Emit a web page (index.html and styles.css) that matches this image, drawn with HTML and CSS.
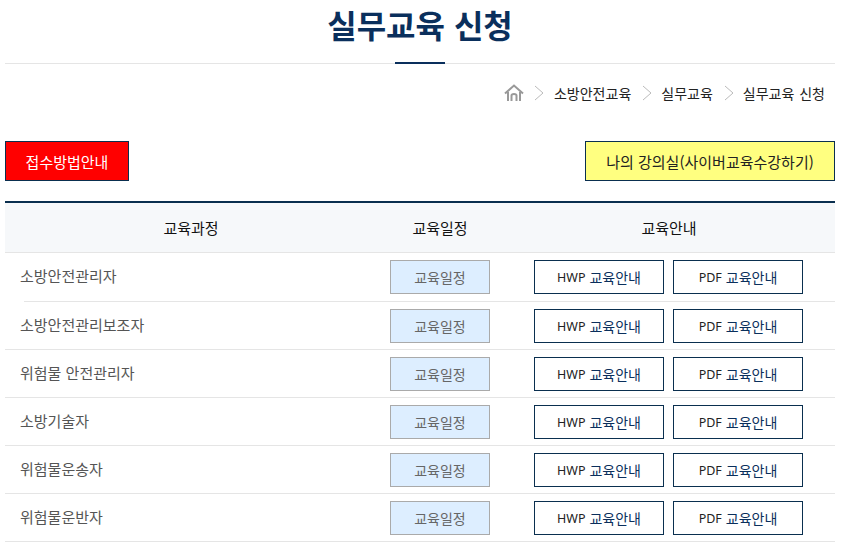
FILE: index.html
```html
<!DOCTYPE html>
<html lang="ko">
<head>
    <meta charset="UTF-8">
    <meta name="viewport" content="width=device-width, initial-scale=1.0">
    <title>실무교육 신청</title>
    <link rel="stylesheet" href="styles.css">
</head>
<body>
    <div class="page">
        <h1 class="page-title">실무교육 신청</h1>

        <div class="breadcrumb">
            <svg class="home" width="20" height="18" viewBox="0 0 20 18" fill="none" stroke="#999" stroke-width="2">
                <path d="M1 9.5 L10 1.5 L19 9.5"/>
                <path d="M4 8 V17 M16 8 V17"/>
                <path d="M7.5 17 V11.5 Q7.5 10 10 10 Q12.5 10 12.5 11.5 V17"/>
            </svg>
            <svg class="sep" width="10" height="18" viewBox="0 0 10 18" fill="none" stroke="#bbb" stroke-width="1"><path d="M1 2 L9 9 L1 16"/></svg>
            <span>소방안전교육</span>
            <svg class="sep" width="10" height="18" viewBox="0 0 10 18" fill="none" stroke="#bbb" stroke-width="1"><path d="M1 2 L9 9 L1 16"/></svg>
            <span>실무교육</span>
            <svg class="sep" width="10" height="18" viewBox="0 0 10 18" fill="none" stroke="#bbb" stroke-width="1"><path d="M1 2 L9 9 L1 16"/></svg>
            <span>실무교육 신청</span>
        </div>

        <div class="actions">
            <a class="btn-red">접수방법안내</a>
            <a class="btn-yellow">나의 강의실(사이버교육수강하기)</a>
        </div>

        <table class="course-table">
            <thead>
                <tr>
                    <th class="col-name">교육과정</th>
                    <th class="col-date">교육일정</th>
                    <th class="col-info">교육안내</th>
                </tr>
            </thead>
            <tbody>
                <tr>
                    <td class="name">소방안전관리자</td>
                    <td class="date"><a class="btn-date">교육일정</a></td>
                    <td class="info"><a class="btn-file">HWP <em>교육안내</em></a><a class="btn-file">PDF <em>교육안내</em></a></td>
                </tr>
                <tr>
                    <td class="name">소방안전관리보조자</td>
                    <td class="date"><a class="btn-date">교육일정</a></td>
                    <td class="info"><a class="btn-file">HWP <em>교육안내</em></a><a class="btn-file">PDF <em>교육안내</em></a></td>
                </tr>
                <tr>
                    <td class="name">위험물 안전관리자</td>
                    <td class="date"><a class="btn-date">교육일정</a></td>
                    <td class="info"><a class="btn-file">HWP <em>교육안내</em></a><a class="btn-file">PDF <em>교육안내</em></a></td>
                </tr>
                <tr>
                    <td class="name">소방기술자</td>
                    <td class="date"><a class="btn-date">교육일정</a></td>
                    <td class="info"><a class="btn-file">HWP <em>교육안내</em></a><a class="btn-file">PDF <em>교육안내</em></a></td>
                </tr>
                <tr>
                    <td class="name">위험물운송자</td>
                    <td class="date"><a class="btn-date">교육일정</a></td>
                    <td class="info"><a class="btn-file">HWP <em>교육안내</em></a><a class="btn-file">PDF <em>교육안내</em></a></td>
                </tr>
                <tr>
                    <td class="name">위험물운반자</td>
                    <td class="date"><a class="btn-date">교육일정</a></td>
                    <td class="info"><a class="btn-file">HWP <em>교육안내</em></a><a class="btn-file">PDF <em>교육안내</em></a></td>
                </tr>
            </tbody>
        </table>
    </div>
</body>
</html>
```

FILE: styles.css
```css
* {
    box-sizing: border-box;
}

html, body {
    height: 100%;
    overflow: hidden;
}

body {
    margin: 0;
    background: #fff;
    font-family: "Noto Sans CJK KR", "Noto Sans", sans-serif;
    font-size: 14px;
    color: #222;
}

.page {
    width: 830px;
    margin-left: 5px;
}

.page-title {
    height: 64px;
    margin: 0;
    position: relative;
    border-bottom: 1px solid #e5e5e5;
    text-align: center;
    font-size: 32px;
    font-weight: 700;
    line-height: 48px;
    color: #0a2f5c;
}

.page-title::after {
    content: "";
    width: 50px;
    height: 2px;
    position: absolute;
    left: 390px;
    bottom: -1px;
    background: #0a2f5c;
}

.breadcrumb {
    height: 57px;
    padding-right: 10px;
    display: flex;
    align-items: center;
    justify-content: flex-end;
    font-size: 14px;
    word-spacing: 1px;
    color: #222;
}

.breadcrumb .home {
    margin-right: 10px;
}

.breadcrumb .sep {
    margin-right: 9px;
}

.breadcrumb .home + .sep {
    margin-right: 10px;
}

.breadcrumb span {
    margin-right: 11px;
}

.breadcrumb span:last-child {
    margin-right: 0;
}

.actions {
    height: 80px;
    padding-top: 20px;
    display: flex;
    align-items: flex-start;
    justify-content: space-between;
}

.btn-red, .btn-yellow {
    height: 40px;
    display: flex;
    align-items: center;
    justify-content: center;
    border: 1px solid #0a2f4f;
    font-size: 15px;
}

.btn-red {
    width: 124px;
    background: #f00;
    color: #fff;
}

.btn-yellow {
    width: 250px;
    background: #ffff80;
    color: #222;
}

.course-table {
    width: 830px;
    border-collapse: separate;
    border-spacing: 0;
    table-layout: fixed;
    border-top: 2px solid #0a2f4f;
}

.course-table th {
    height: 50px;
    padding: 0 0 1px;
    background: #f6f8fa;
    border-bottom: 1px solid #e5e5e5;
    font-size: 15px;
    font-weight: 400;
    color: #111;
}

.col-name {
    width: 372px;
}

.col-date {
    width: 126px;
}

.course-table td {
    height: 48px;
    padding: 0;
    border-bottom: 1px solid #e5e5e5;
}

.course-table tbody tr:first-child td {
    height: 49px;
}

/* the first row's line starts further in than the others */
.course-table tbody tr:first-child .name {
    border-bottom-color: transparent;
    background: linear-gradient(#e5e5e5, #e5e5e5) no-repeat 19px 100% / 100% 1px border-box;
}

.name {
    padding-bottom: 3px !important;
    padding-left: 15px !important;
    font-size: 15px;
    color: #555;
}

.date, .info {
    padding-top: 7px !important;
    vertical-align: top;
}

.date {
    text-align: center;
}

.info {
    padding-left: 31px !important;
}

.btn-date {
    width: 100px;
    height: 34px;
    margin: 0 auto;
    display: flex;
    align-items: center;
    justify-content: center;
    background: #ddeeff;
    border: 1px solid #aaa;
    font-size: 14px;
    color: #666;
}

.btn-file {
    width: 130px;
    height: 34px;
    margin-right: 9px;
    display: inline-flex;
    align-items: center;
    justify-content: center;
    gap: 4px;
    vertical-align: top;
    border: 1px solid #0a2f4f;
    font-family: "Noto Sans", "Noto Sans CJK KR", sans-serif;
    font-size: 12.5px;
    color: #222;
}

.btn-file em {
    font-family: "Noto Sans CJK KR", sans-serif;
    font-size: 14px;
    font-style: normal;
    color: #0a2f5c;
}
```
